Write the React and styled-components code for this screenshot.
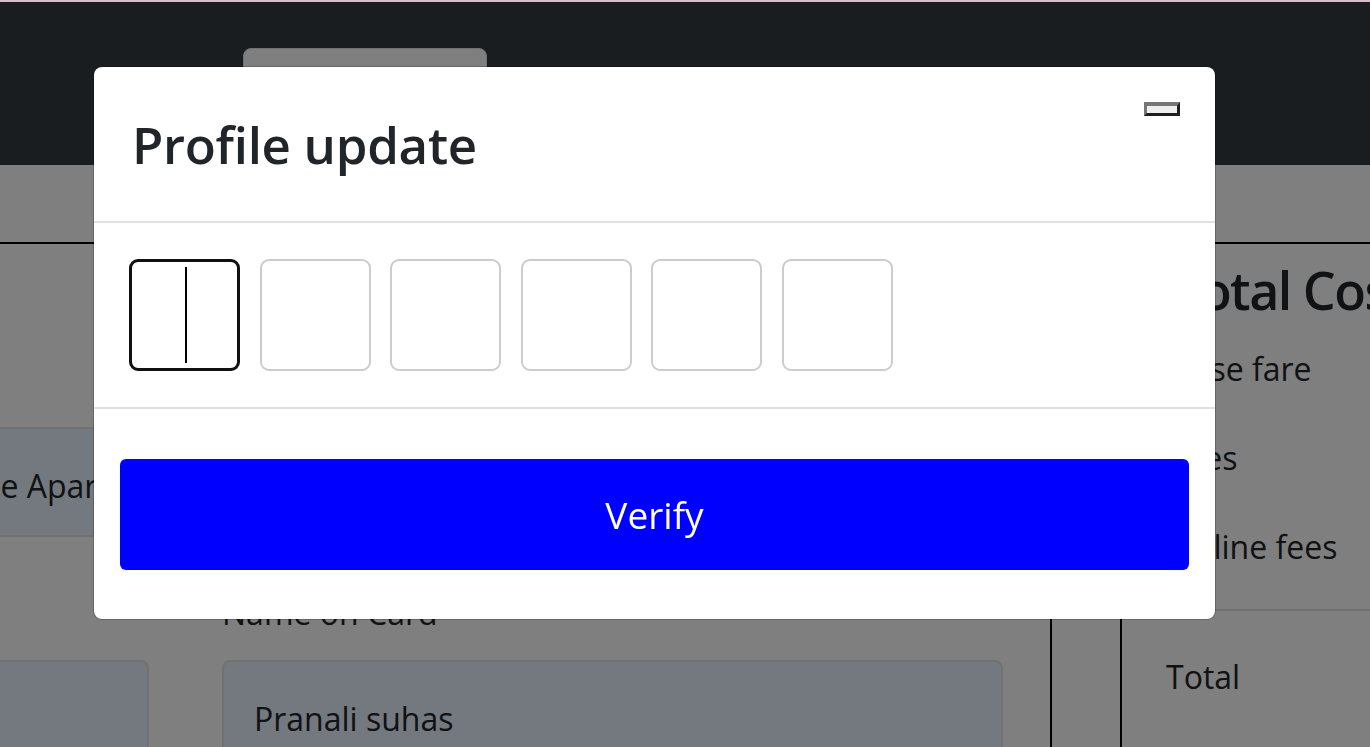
import styled, { createGlobalStyle } from "styled-components";

const GlobalStyle = createGlobalStyle`
  html, body {
    margin: 0;
    padding: 0;
    overflow: hidden;
    background-color: #fff;
    font-family: "Open Sans", "Noto Sans", sans-serif;
    color: #212529;
  }
  * {
    box-sizing: border-box;
  }
`;

const Page = styled.div`
  width: 1370px;
  height: 747px;
  overflow: hidden;
`;

const Navbar = styled.nav`
  height: 165px;
  background-color: #343a40;
  display: flex;
  padding: 48px 0 0 243px;
`;

const NavButton = styled.button`
  width: 244px;
  height: 60px;
  background-color: #fff;
  border: 1px solid #dee2e6;
  border-radius: 8px;
`;

const Main = styled.main`
  margin-top: 77px;
  border-top: 2px solid #000;
  display: flex;
  height: 600px;
`;

const FormColumn = styled.section`
  margin-left: -151px;
  width: 1201px;
  padding: 183px 47px 0 0;
  display: flex;
  flex-direction: column;
`;

const Label = styled.label`
  font-size: 32px;
  line-height: 48px;
  margin: ${(p) => p.$top || 0}px 0 0 ${(p) => p.$left || 0}px;
`;

const FieldRow = styled.div`
  display: flex;
  gap: 73px;
  margin-top: ${(p) => p.$top || 0}px;
`;

const Field = styled.div`
  width: ${(p) => (p.$width ? `${p.$width}px` : "100%")};
  height: 110px;
  flex-shrink: 0;
  background-color: #e8f0fe;
  border: 2px solid #dee2e6;
  border-radius: 8px;
  padding: 6px 0 0 30px;
  display: flex;
  align-items: center;
  font-size: 32px;
  white-space: nowrap;
  overflow: hidden;
`;

const CostColumn = styled.aside`
  flex: 1;
  border-left: 2px solid #000;
  display: flex;
  flex-direction: column;
`;

const CostTitle = styled.h1`
  margin: 15px 0 4px 0;
  padding-left: 120px;
  font-size: 52px;
  line-height: 1.2;
  font-weight: 600;
  letter-spacing: -1.5px;
  white-space: nowrap;
`;

const FeeRow = styled.div`
  padding: 20px 0 21px ${(p) => p.$left || 120}px;
  font-size: 32px;
  line-height: 48px;
  white-space: nowrap;
`;

const TotalCell = styled.div`
  margin: 17px 0 0 68px;
  border-left: 2px solid #000;
  border-top: 2px solid #dee2e6;
  padding: 42px 0 0 44px;
  font-size: 32px;
  line-height: 48px;
  flex: 1;
`;

const Backdrop = styled.div`
  position: fixed;
  inset: 0;
  background-color: rgba(0, 0, 0, 0.5);
  display: flex;
  flex-direction: column;
`;

const TopStrip = styled.div`
  height: 2px;
  background-color: #d8bfcb;
`;

const Modal = styled.div`
  margin: 64px 0 0 93px;
  width: 1123px;
  background-color: #fff;
  background-clip: padding-box;
  border: 1px solid rgba(0, 0, 0, 0.2);
  border-radius: 9px;
  display: flex;
  flex-direction: column;
`;

const ModalHeader = styled.header`
  display: flex;
  justify-content: space-between;
  align-items: flex-start;
  padding: 35px 35px 58px 38px;
  border-bottom: 2px solid #dee2e6;
`;

const ModalTitle = styled.h2`
  margin: 12px 0 -12px;
  font-size: 51px;
  line-height: 1.2;
  font-weight: 600;
  letter-spacing: -0.3px;
  color: #212529;
`;

const CloseButton = styled.button`
  width: 36px;
  height: 14px;
  padding: 0;
  background-color: #efefef;
  border-style: solid;
  border-width: 4px 3px 3px 3px;
  border-color: #767676 #1f1f1f #1f1f1f #767676;
`;

const ModalBody = styled.div`
  display: flex;
  gap: 19.5px;
  padding: 36px 35px;
  border-bottom: 2px solid #dee2e6;
`;

const OtpBox = styled.div`
  width: 111px;
  height: 112px;
  border-radius: 9px;
  border: ${(p) => (p.$active ? "3px solid #111" : "2px solid #ccc")};
  display: flex;
  align-items: center;
  justify-content: center;
`;

const Caret = styled.span`
  width: 2px;
  height: 96px;
  margin-left: 3px;
  background-color: #000;
`;

const ModalFooter = styled.footer`
  padding: 50px 26px 49px;
`;

const VerifyButton = styled.button`
  width: 100%;
  height: 111px;
  border: 0;
  border-radius: 6px;
  background-color: #0000ff;
  color: #fff;
  font-family: "Open Sans", "Noto Sans", sans-serif;
  font-size: 37px;
  cursor: pointer;
`;

const fees = [
  { label: "Base fare", left: 120 },
  { label: "Taxes", left: 100 },
  { label: "Airline fees", left: 120 },
];

export default function App() {
  return (
    <>
      <GlobalStyle />
      <Page>
        <Navbar>
          <NavButton />
        </Navbar>
        <Main>
          <FormColumn>
            <Field>Sunshine Apartment, Pune</Field>
            <Label $top={52} $left={373}>
              Name on Card
            </Label>
            <FieldRow $top={23}>
              <Field $width={300} />
              <Field $width={781}>Pranali suhas</Field>
            </FieldRow>
          </FormColumn>
          <CostColumn>
            <CostTitle>Total Cost</CostTitle>
            {fees.map((f) => (
              <FeeRow key={f.label} $left={f.left}>
                {f.label}
              </FeeRow>
            ))}
            <TotalCell>Total</TotalCell>
          </CostColumn>
        </Main>
      </Page>
      <Backdrop>
        <TopStrip />
        <Modal>
          <ModalHeader>
            <ModalTitle>Profile update</ModalTitle>
            <CloseButton aria-label="Close" />
          </ModalHeader>
          <ModalBody>
            {[0, 1, 2, 3, 4, 5].map((i) => (
              <OtpBox key={i} $active={i === 0}>
                {i === 0 && <Caret />}
              </OtpBox>
            ))}
          </ModalBody>
          <ModalFooter>
            <VerifyButton>Verify</VerifyButton>
          </ModalFooter>
        </Modal>
      </Backdrop>
    </>
  );
}
